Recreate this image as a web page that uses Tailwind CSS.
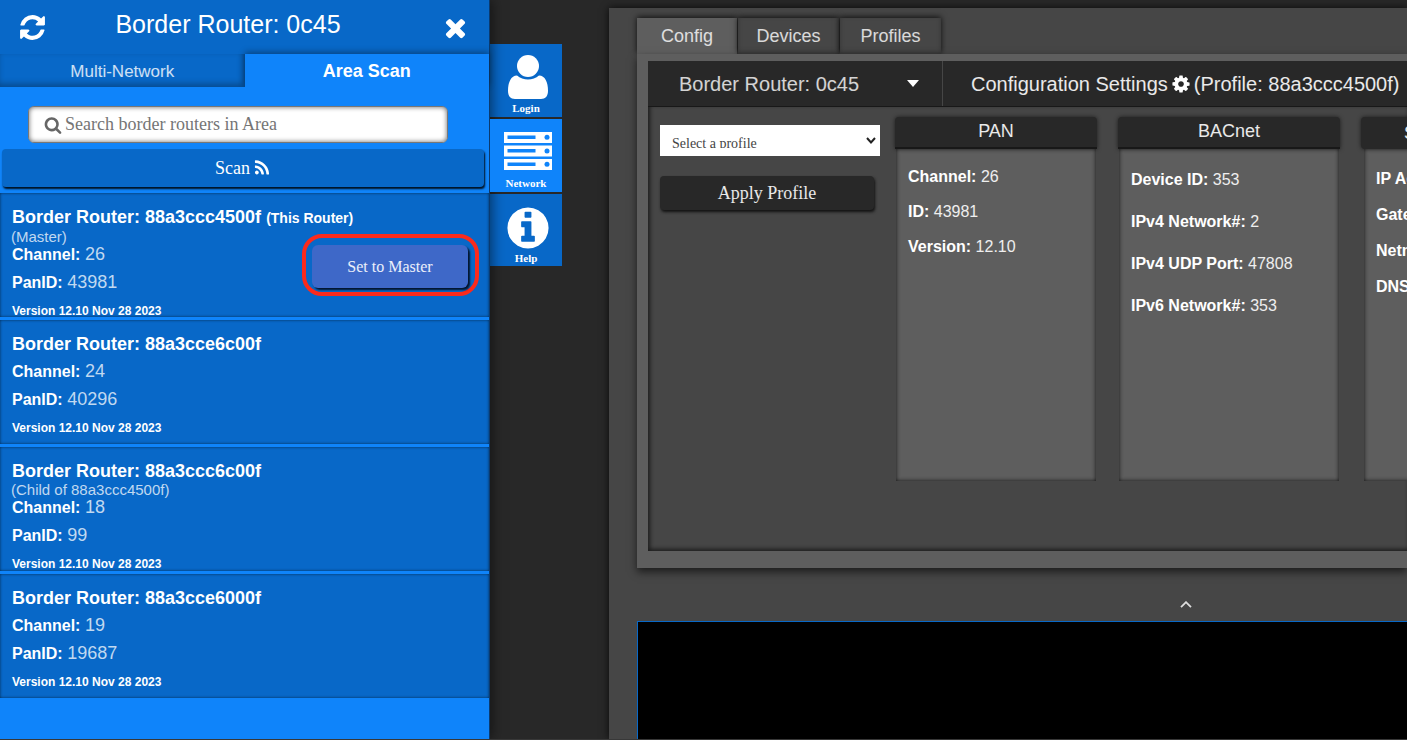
<!DOCTYPE html>
<html lang="en">
<head>
<meta charset="utf-8">
<title>Border Router: 0c45</title>
<script src="https://cdn.jsdelivr.net/npm/@tailwindcss/browser@4"></script>
</head>
<body class="bg-[#282828] font-['Liberation_Sans',sans-serif] text-white">
<div class="flex h-screen overflow-hidden border-b border-[#383838]">

  <!-- Network sidebar -->
  <aside class="relative z-10 flex w-[490px] shrink-0 flex-col border-r border-[#0a3a70] bg-[#0f84fa] shadow-[2px_0_12px_rgba(0,0,0,0.5)]">
    <header class="flex h-[54px] shrink-0 items-center justify-between bg-[#0868c8] pr-[19px] pl-[18px]">
      <button type="button" aria-label="Refresh">
        <svg class="size-[29px]" viewBox="0 0 1792 1792" fill="currentColor"><path d="M1639 1056q0 5-1 7-64 268-268 434.5t-478 166.5q-146 0-282.5-55t-243.5-157l-129 129q-19 19-45 19t-45-19-19-45v-448q0-26 19-45t45-19h448q26 0 45 19t19 45-19 45l-137 137q71 66 161 102t187 36q134 0 250-65t186-179q11-17 53-117 8-23 30-23h192q13 0 22.5 9.5t9.5 22.5zm25-800v448q0 26-19 45t-45 19h-448q-26 0-45-19t-19-45 19-45l138-138q-148-137-349-137-134 0-250 65t-186 179q-11 17-53 117-8 23-30 23h-199q-13 0-22.5-9.5t-9.5-22.5v-7q65-268 270-434.5t480-166.5q146 0 284 55.5t245 156.5l130-129q19-19 45-19t45 19 19 45z"/></svg>
      </button>
      <h1 class="pr-8 pb-1.5 text-[25px] leading-8">Border Router: 0c45</h1>
      <button type="button" aria-label="Close">
        <svg class="size-[29px]" viewBox="0 0 1792 1792" fill="currentColor"><path d="M1490 1322q0 40-28 68l-136 136q-28 28-68 28t-68-28l-294-294-294 294q-28 28-68 28t-68-28l-136-136q-28-28-28-68t28-68l294-294-294-294q-28-28-28-68t28-68l136-136q28-28 68-28t68 28l294 294 294-294q28-28 68-28t68 28l136 136q28 28 28 68t-28 68l-294 294 294 294q28 28 28 68z"/></svg>
      </button>
    </header>

    <nav class="grid h-[33px] shrink-0 grid-cols-2">
      <button type="button" class="bg-[#0868c8] pt-0.5 text-[17px] text-white/80 shadow-[inset_-2px_-3px_6px_rgba(0,0,0,0.3)]">Multi-Network</button>
      <button type="button" class="bg-[#0f84fa] pt-0.5 text-[18px] font-bold shadow-[0_-2px_6px_rgba(0,0,0,0.35)]">Area Scan</button>
    </nav>

    <div class="relative z-10 flex shrink-0 flex-col bg-[#0f84fa] pt-[19px] pb-1.5">
      <label class="mr-[41px] ml-7 flex h-[37px] items-center gap-[3px] rounded-md border border-[#777] bg-white pl-[15px] text-[#666] shadow-[inset_0_0_5px_rgba(0,0,0,0.6)]">
        <svg class="size-[18px] shrink-0" viewBox="0 0 1792 1792" fill="currentColor"><path d="M1216 832q0-185-131.5-316.5t-316.5-131.5-316.5 131.5-131.5 316.5 131.5 316.5 316.5 131.5 316.5-131.5 131.5-316.5zm512 832q0 52-38 90t-90 38q-54 0-90-38l-343-342q-179 124-399 124-143 0-273.5-55.5t-225-150-150-225-55.5-273.5 55.5-273.5 150-225 225-150 273.5-55.5 273.5 55.5 225 150 150 225 55.5 273.5q0 220-124 399l343 343q37 37 37 90z"/></svg>
        <input type="search" aria-label="Search border routers" placeholder="Search border routers in Area" class="min-w-0 flex-1 bg-transparent font-['Liberation_Serif',serif] text-[18px] outline-none placeholder:text-[#757575]">
      </label>
      <button type="button" class="mt-1.5 mr-[5px] ml-0.5 flex h-[38px] items-center justify-center gap-[3px] rounded-sm bg-[#0868c8] font-['Liberation_Serif',serif] text-[18px] shadow-[1px_2px_2px_#001020]">
        Scan
        <svg class="size-[18px]" viewBox="0 0 1792 1792" fill="currentColor"><path d="M576 1344q0 80-56 136t-136 56-136-56-56-136 56-136 136-56 136 56 56 136zm512 123q2 28-17 48-18 21-47 21h-135q-25 0-43-16.5t-20-41.5q-22-229-184.5-391.5t-391.5-184.5q-25-2-41.5-20t-16.5-43v-135q0-29 21-47 17-17 43-17h5q160 13 306 80.5t259 181.5q114 113 181.5 259t80.5 306zm512 2q2 27-18 47-18 20-46 20h-143q-26 0-44.5-17.5t-19.5-42.5q-12-215-101-408.5t-231.5-336-336-231.5-408.5-102q-25-1-42.5-19.5t-17.5-43.5v-143q0-28 20-46 18-18 44-18h3q262 13 501.5 120t425.5 294q187 186 294 425.5t120 501.5z"/></svg>
      </button>
    </div>

    <ul class="flex flex-col gap-[3px]">
      <li class="relative h-[124px] bg-[#0868c8] px-3 pt-2.5 shadow-[inset_0_0_3px_rgba(0,0,0,0.6)]">
        <h2 class="text-[18px] leading-7 font-bold">Border Router: 88a3ccc4500f <span class="text-[14px]">(This Router)</span></h2>
        <p class="-ml-px text-[15px] leading-[9px] text-white/75">(Master)</p>
        <p class="text-[16px] leading-7"><b>Channel:</b> <span class="text-[18px] leading-5 text-white/75">26</span></p>
        <p class="text-[16px] leading-7"><b>PanID:</b> <span class="text-[18px] leading-5 text-white/75">43981</span></p>
        <p class="text-[12px] leading-7 font-bold">Version 12.10 Nov 28 2023</p>
        <div class="absolute top-[41px] right-2.5 rounded-[20px] border-4 border-[#fb2a1c] pt-[7px] pr-[7px] pb-1 pl-1.5">
          <button type="button" class="h-[43px] w-[156px] rounded-md bg-[#3e68c8] font-['Liberation_Serif',serif] text-[16px] text-white/90 shadow-[2px_2px_2px_#04132c]">Set to Master</button>
        </div>
      </li>
      <li class="h-[124px] bg-[#0868c8] px-3 pt-2.5 shadow-[inset_0_0_3px_rgba(0,0,0,0.6)]">
        <h2 class="text-[18px] leading-7 font-bold">Border Router: 88a3cce6c00f</h2>
        <p class="text-[16px] leading-7"><b>Channel:</b> <span class="text-[18px] leading-5 text-white/75">24</span></p>
        <p class="text-[16px] leading-7"><b>PanID:</b> <span class="text-[18px] leading-5 text-white/75">40296</span></p>
        <p class="text-[12px] leading-7 font-bold">Version 12.10 Nov 28 2023</p>
      </li>
      <li class="h-[124px] bg-[#0868c8] px-3 pt-2.5 shadow-[inset_0_0_3px_rgba(0,0,0,0.6)]">
        <h2 class="text-[18px] leading-7 font-bold">Border Router: 88a3ccc6c00f</h2>
        <p class="-ml-px text-[15px] leading-[9px] text-white/75">(Child of 88a3ccc4500f)</p>
        <p class="text-[16px] leading-7"><b>Channel:</b> <span class="text-[18px] leading-5 text-white/75">18</span></p>
        <p class="text-[16px] leading-7"><b>PanID:</b> <span class="text-[18px] leading-5 text-white/75">99</span></p>
        <p class="text-[12px] leading-7 font-bold">Version 12.10 Nov 28 2023</p>
      </li>
      <li class="h-[124px] bg-[#0868c8] px-3 pt-2.5 shadow-[inset_0_0_3px_rgba(0,0,0,0.6)]">
        <h2 class="text-[18px] leading-7 font-bold">Border Router: 88a3cce6000f</h2>
        <p class="text-[16px] leading-7"><b>Channel:</b> <span class="text-[18px] leading-5 text-white/75">19</span></p>
        <p class="text-[16px] leading-7"><b>PanID:</b> <span class="text-[18px] leading-5 text-white/75">19687</span></p>
        <p class="text-[12px] leading-7 font-bold">Version 12.10 Nov 28 2023</p>
      </li>
    </ul>
  </aside>

  <!-- Icon rail -->
  <nav class="flex w-[72px] shrink-0 flex-col gap-0.5 pt-11 font-['Liberation_Serif',serif] text-[11px] leading-3 font-bold">
    <button type="button" class="flex h-[73px] flex-col items-center justify-end gap-[3px] bg-[#0868c8] pb-[3px]">
      <svg class="ml-1 h-[44px] w-10" viewBox="0 0 40 44" fill="currentColor"><path d="M9 20.500C3 20.500 0 27 0 36C0 41 2.500 44 7 44H33C37.500 44 40 41 40 36C40 27 37 20.500 31 20.500C28 23 24 24.500 20 24.500S12 23 9 20.500Z"/><circle cx="20" cy="11" r="11"/></svg>
      Login
    </button>
    <button type="button" class="relative z-20 flex h-[73px] flex-col items-center justify-end gap-[7px] bg-[#0f84fa] pb-[3px]">
      <svg class="ml-1 h-[38px] w-12" viewBox="0 0 48 38"><path fill="#fff" d="M0 0h48v11H0zM0 13.500h48v11H0zM0 27h48v11H0z"/><path fill="#0f84fa" d="M3.500 3.500h28v3.500h-28zM3.500 17h28v3.500h-28zM3.500 30.500h28v3.500h-28z"/><g fill="#0f84fa"><circle cx="43" cy="5.300" r="2.500"/><circle cx="43" cy="18.900" r="2.500"/><circle cx="43" cy="32.300" r="2.500"/></g></svg>
      Network
    </button>
    <button type="button" class="flex h-[72px] flex-col items-center justify-end bg-[#0868c8] pb-0.5">
      <svg class="ml-1 size-12" viewBox="0 0 1792 1792" fill="currentColor"><path d="M1152 1376v-160q0-14-9-23t-23-9h-96v-512q0-14-9-23t-23-9h-320q-14 0-23 9t-9 23v160q0 14 9 23t23 9h96v320h-96q-14 0-23 9t-9 23v160q0 14 9 23t23 9h448q14 0 23-9t9-23zm-128-896v-160q0-14-9-23t-23-9h-192q-14 0-23 9t-9 23v160q0 14 9 23t23 9h192q14 0 23-9t9-23zm640 416q0 209-103 385.5t-279.5 279.5-385.5 103-385.5-103-279.5-279.5-103-385.5 103-385.5 279.5-279.5 385.5-103 385.5 103 279.5 279.5 103 385.5z"/></svg>
      Help
    </button>
  </nav>

  <!-- Workspace -->
  <main class="mt-2 ml-[47px] flex min-w-0 flex-1 flex-col bg-[#464646] pt-2.5 pl-7 shadow-[0_0_8px_rgba(0,0,0,0.8)]">
    <nav class="flex h-9 shrink-0 gap-px text-[18px] text-white/80">
      <button type="button" class="w-[100px] bg-[#5e5e5e] shadow-[0_-1px_6px_rgba(0,0,0,0.8)]">Config</button>
      <button type="button" class="w-[101px] bg-[#464646] shadow-[0_-1px_6px_rgba(0,0,0,0.8),inset_0_-2px_4px_rgba(0,0,0,0.25)]">Devices</button>
      <button type="button" class="w-[101px] bg-[#464646] shadow-[0_-1px_6px_rgba(0,0,0,0.8),inset_0_-2px_4px_rgba(0,0,0,0.25)]">Profiles</button>
    </nav>

    <section class="relative bg-[#5e5e5e] pt-[7px] pb-[17px] pl-[11px] shadow-[0_4px_8px_rgba(0,0,0,0.6)]">
      <header class="flex h-[46px] border-b border-[#181818] bg-[#282828] whitespace-nowrap">
        <button type="button" class="flex w-[294px] shrink-0 items-center justify-between pr-[23px] pl-[31px] text-[20px] text-white/80">
          Border Router: 0c45
          <svg class="h-[7px] w-3" viewBox="0 0 12 7" fill="#fff"><path d="M0 0H12L6 7Z"/></svg>
        </button>
        <h2 class="flex items-center gap-[3px] border-l border-[#464646] pl-7 text-[20px] text-white/90">
          Configuration Settings
          <svg class="size-5" viewBox="0 0 1792 1792" fill="#fff"><path d="M1152 896q0-106-75-181t-181-75-181 75-75 181 75 181 181 75 181-75 75-181zm512-109v222q0 12-8 23t-20 13l-185 28q-19 54-39 91 35 50 107 138 10 12 10 25t-9 23q-27 37-99 108t-94 71q-12 0-26-9l-138-108q-44 23-91 38-16 136-29 186-7 28-36 28h-222q-14 0-24.500-8.500t-11.500-21.500l-28-184q-49-16-90-37l-141 107q-10 9-25 9-14 0-25-11-126-114-165-168-7-10-7-23 0-12 8-23 15-21 51-66.500t54-70.500q-27-50-41-99l-183-27q-13-2-21-12.500t-8-23.500v-222q0-12 8-23t19-13l186-28q14-46 39-92-40-57-107-138-10-12-10-24 0-10 9-23 26-36 98.500-107.500t94.500-71.500q13 0 26 10l138 107q44-23 91-38 16-136 29-186 7-28 36-28h222q14 0 24.500 8.500t11.500 21.500l28 184q49 16 90 37l142-107q9-9 24-9 13 0 25 10 129 119 165 170 7 8 7 22 0 12-8 23-15 21-51 66.500t-54 70.500q26 50 41 98l183 28q13 2 21 12.500t8 23.500z"/></svg>
          (Profile: 88a3ccc4500f)
        </h2>
      </header>

      <div class="flex overflow-hidden bg-[#464646] pt-2.5 pb-[70px] pl-3 shadow-[inset_2px_-2px_4px_rgba(0,0,0,0.6)]">
        <div class="flex w-[220px] shrink-0 flex-col gap-5 pt-2 font-['Liberation_Serif',serif]">
          <div class="relative">
            <select aria-label="Profile" class="block h-[31px] w-full appearance-none bg-white pt-[9px] pb-2 pl-3 text-[14px] leading-5 text-[#444]">
              <option>Select a profile</option>
            </select>
            <svg class="pointer-events-none absolute top-3 right-1 h-[7px] w-2.5" viewBox="0 0 10 7" fill="none" stroke="#222" stroke-width="2"><path d="M1 1L5 5.500L9 1"/></svg>
          </div>
          <button type="button" class="mr-1.5 h-[34px] rounded-sm bg-[#282828] text-[18px] text-white/90 shadow-[1px_2px_3px_#111]">Apply Profile</button>
        </div>

        <div class="ml-[15px] flex shrink-0 gap-[21px]">
          <article class="flex h-[364px] w-[202px] flex-col">
            <h3 class="h-8 rounded-t-sm border-b-2 border-[#181818] bg-[#282828] text-center text-[18px] leading-7 text-white/90 shadow-[0_0_4px_rgba(0,0,0,0.6)]">PAN</h3>
            <div class="mx-px flex-1 bg-[#5e5e5e] pt-2.5 pl-3 text-[16px] leading-[35px] text-white/90 shadow-[inset_0_0_4px_rgba(0,0,0,0.8)]">
              <p><b class="text-white">Channel:</b> 26</p>
              <p><b class="text-white">ID:</b> 43981</p>
              <p><b class="text-white">Version:</b> 12.10</p>
            </div>
          </article>
          <article class="flex h-[364px] w-[222px] flex-col">
            <h3 class="h-8 rounded-t-sm border-b-2 border-[#181818] bg-[#282828] text-center text-[18px] leading-7 text-white/90 shadow-[0_0_4px_rgba(0,0,0,0.6)]">BACnet</h3>
            <div class="mx-px flex-1 bg-[#5e5e5e] pt-2.5 pl-3 text-[16px] leading-[42px] text-white/90 shadow-[inset_0_0_4px_rgba(0,0,0,0.8)]">
              <p><b class="text-white">Device ID:</b> 353</p>
              <p><b class="text-white">IPv4 Network#:</b> 2</p>
              <p><b class="text-white">IPv4 UDP Port:</b> 47808</p>
              <p><b class="text-white">IPv6 Network#:</b> 353</p>
            </div>
          </article>
          <article class="flex h-[364px] w-[222px] flex-col">
            <h3 class="h-8 rounded-sm bg-[#282828] pl-[43px] text-[18px] leading-8 text-white/90 shadow-[0_0_4px_rgba(0,0,0,0.6)]">System</h3>
            <div class="mx-[3px] flex-1 bg-[#5e5e5e] pt-3 pl-3 text-[16px] leading-9 font-bold shadow-[inset_0_0_4px_rgba(0,0,0,0.8)]">
              <p>IP Address:</p>
              <p>Gateway:</p>
              <p>Netmask:</p>
              <p>DNS:</p>
            </div>
          </article>
        </div>
      </div>
    </section>

    <button type="button" aria-label="Expand console" class="flex h-[53px] w-[1098px] shrink-0 items-center justify-center pt-5">
      <svg class="h-[7px] w-3" viewBox="0 0 12 7" fill="none" stroke="#ddd" stroke-width="1.800"><path d="M1 6.200L6 1.200L11 6.200"/></svg>
    </button>
    <section aria-label="Console" class="flex-1 border-t border-l border-[#0868c8] bg-black"></section>
  </main>
</div>
</body>
</html>
